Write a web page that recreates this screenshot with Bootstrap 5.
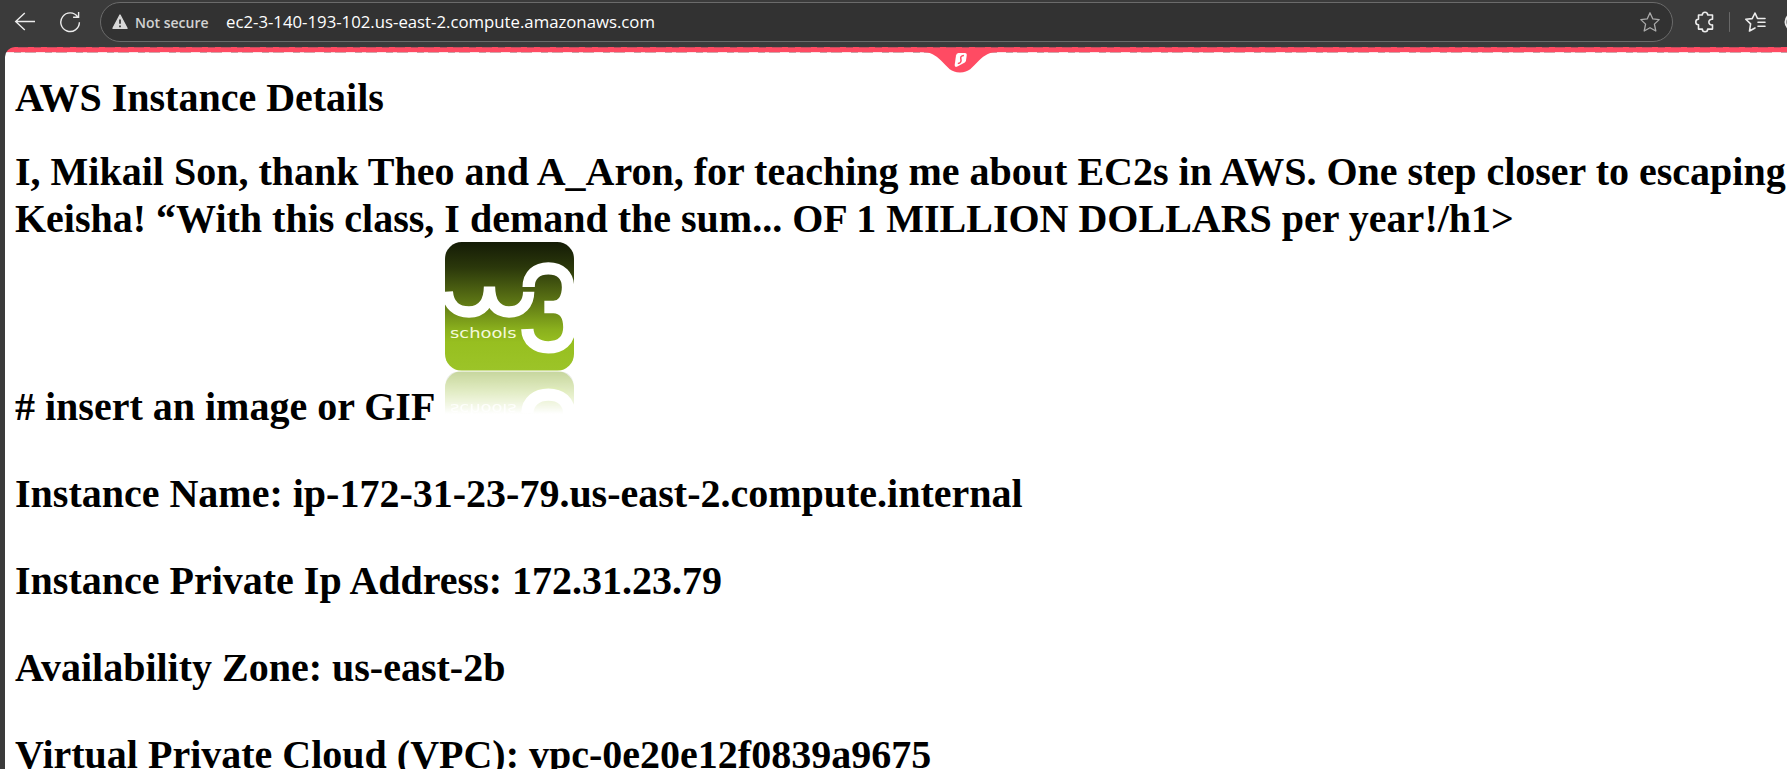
<!DOCTYPE html>
<html lang="en">
<head>
<meta charset="utf-8">
<title>AWS Instance Details</title>
<link href="https://cdn.jsdelivr.net/npm/bootstrap@5.3.0/dist/css/bootstrap.min.css" rel="stylesheet">
<style>
body{background:#3b3b3b;height:769px}
.toolbar{height:47px;font-family:"Open Sans","Noto Sans",sans-serif;padding-left:12px}
.toolbar svg{display:block;flex:none}
.address{width:1573px;height:40px;margin:2px 0 0 18px;background:#323232;border:1px solid #6b6b6b;border-radius:20px;padding:0 11px 0 11px;color:#fff}
.warn-label{width:91px;color:#d2d2d2;font-size:14px;font-weight:600;margin-left:7px;white-space:nowrap}
.url{font-size:16.75px;white-space:nowrap}
.page{
  margin-left:5px;height:722px;border-top-left-radius:10px;padding:27px 0 0 10px;color:#000;
  font-family:"Liberation Serif",serif;background-color:#fff;background-repeat:no-repeat;
  background-image:
    repeating-linear-gradient(90deg,#b9485a 0 7px,#ff4b63 7px 13px,#c84a5d 13px 23px,#ff4b63 23px 29px),
    repeating-linear-gradient(90deg,#fbe3e6 0 9px,#c9a0a6 9px 16px,#f5d5d9 16px 20px,#d3a5ab 20px 31px),
    linear-gradient(#ff4b63,#ff4b63);
  background-size:100% 1px,100% 1px,100% 5px;
  background-position:0 0,0 5px,0 0;
}
.notch{left:916px;top:48px}
.page h1,.page p{font-size:40px;line-height:47px;font-weight:700;white-space:nowrap}
.page h1{margin:0 0 27px}
.page p{margin:40px 0 0}
.page h1 + p{margin-top:39.5px}
.w3-logo{vertical-align:baseline;margin-left:1px}
</style>
</head>
<body class="overflow-hidden position-relative">
<nav class="toolbar d-flex align-items-start">
  <svg width="24" height="44" viewBox="0 0 24 44" fill="none" stroke="#ececec" stroke-width="1.4"><path d="M12.800 13 3.700 21.500 12.800 30M3.700 21.500H23"/></svg>
  <svg class="ms-4" width="22" height="44" viewBox="0 0 22 44" fill="none" stroke="#ececec" stroke-width="1.400"><path d="M17.800 17A9.300 9.300 0 1 0 19.400 22.300M18.600 12v5.300h-5.500"/></svg>
  <div class="address d-flex align-items-center">
    <svg width="16" height="16" viewBox="0 0 16 16"><path d="M8 1 15 14.300H1Z" fill="#d8d8d8" stroke="#d8d8d8" stroke-width="1.400" stroke-linejoin="round"/><path d="M8 5.500v4.300M8 11.400v1.800" stroke="#323232" stroke-width="1.700"/></svg>
    <span class="warn-label">Not secure</span><span class="url">ec2-3-140-193-102.us-east-2.compute.amazonaws.com</span>
    <svg class="ms-auto" width="22" height="22" viewBox="0 0 22 22" fill="none" stroke="#aaa" stroke-width="1.300" stroke-linejoin="round"><path d="m11 1.800 2.800 6.100 6.400.7-4.800 4.500 1.400 6.900-5.800-3.300-5.800 3.300 1.400-6.900L1.800 8.600l6.400-.7Z"/></svg>
  </div>
  <svg width="114" height="44" viewBox="1673 0 114 44" fill="none" stroke="#ececec" stroke-width="1.600" stroke-linejoin="round" stroke-linecap="round">
    <path d="M1698.500 15h3.800a2.700 2.700 0 0 1 5.400 0h4.800v4.300a2.900 2.900 0 1 0 0 5.600v4.200h-4.800a2.700 2.700 0 0 1-5.400 0H1698.500v-4.400a2.700 2.700 0 0 1 0-5.400Z"/>
    <path d="M1729.500 12.500V31.500" stroke="#686868" stroke-width="1"/>
    <path d="M1765 18.500H1757.500L1755 13 1752.200 18.600 1745.800 19.200 1750.600 23.900 1749.500 31 1755 28M1758 22.300H1765M1758 26.300H1765"/>
    <circle cx="1794" cy="22" r="8.500" stroke-width="2"/>
  </svg>
</nav>
<main class="page">
  <h1>AWS Instance Details</h1>
  <h1 class="mb-0">I, Mikail Son, thank Theo and A_Aron, for teaching me about EC2s in AWS. One step closer to escaping<br>Keisha! “With this class, I demand the sum... OF 1 MILLION DOLLARS per year!/h1&gt;<br># insert an image or GIF <svg class="w3-logo" width="130" height="178" viewBox="45 36 390 534">
    <defs>
      <linearGradient id="leaf" x1="0" y1="0" x2="0" y2="1"><stop stop-color="#141b06"/><stop offset=".2" stop-color="#2b380b"/><stop offset=".45" stop-color="#5a7214"/><stop offset=".68" stop-color="#8ab01d"/><stop offset=".78" stop-color="#97bf20"/><stop offset="1" stop-color="#9cc428"/></linearGradient>
      <linearGradient id="shade" gradientUnits="userSpaceOnUse" x1="0" y1="424" x2="0" y2="520"><stop stop-color="#8c9a70" stop-opacity=".45"/><stop offset="1" stop-color="#8c9a70" stop-opacity="0"/></linearGradient>
      <linearGradient id="fade" gradientUnits="userSpaceOnUse" x1="0" y1="424" x2="0" y2="552"><stop stop-color="#888"/><stop offset=".5" stop-color="#444"/><stop offset="1" stop-color="#000"/></linearGradient>
      <clipPath id="tile"><rect x="45" y="36" width="387" height="386" rx="50"/></clipPath>
      <mask id="fadeMask" maskUnits="userSpaceOnUse" x="45" y="420" width="390" height="150"><rect x="45" y="424" width="390" height="140" fill="url(#fade)"/></mask>
    </defs>
    <g id="mark3" clip-path="url(#tile)">
      <rect x="45" y="36" width="387" height="386" fill="url(#leaf)"/>
      <g fill="none" stroke="#fff" stroke-width="34">
        <path d="M52 185C55 225 80 246 117 246 155 246 178 222 178.500 170 179 222 200 246 237 246 272 246 296 222 296 185"/>
        <path stroke-width="37" d="M296 171C296 136 320 115 355 115 393 115 414 138 414 172 414 208 396 231 370 231H343M370 231C401 231 418 255 418 292 418 332 392 352 355 352 320 352 293 332 292 297"/>
      </g>
      <path d="M408 165H432V300H414Z" fill="#fff"/>
      <text x="60" y="323" font-family="DejaVu Sans, sans-serif" font-size="43" font-weight="400" fill="#f4f9dc" textLength="200" lengthAdjust="spacingAndGlyphs">schools</text>
    </g>
    <g mask="url(#fadeMask)"><use href="#mark3" transform="translate(0 846) scale(1 -1)"/><path d="M45 474Q45 424 95 424H382Q432 424 432 474V500C415 474 390 470 355 470 315 470 285 495 275 530H45Z" fill="url(#shade)"/></g>
  </svg></h1>
  <p>Instance Name: ip-172-31-23-79.us-east-2.compute.internal</p>
  <p>Instance Private Ip Address: 172.31.23.79</p>
  <p>Availability Zone: us-east-2b</p>
  <p>Virtual Private Cloud (VPC): vpc-0e20e12f0839a9675</p>
</main>
<svg class="notch position-absolute" width="88" height="26" viewBox="916 48 88 26">
  <path d="M916 48H1004V52H998C989 52 985 55 979 60.500 972 67.500 969 72.500 960 72.500 951 72.500 948 67.500 941 60.500 935 55 931 52 922 52H916Z" fill="#ff4b63"/>
  <path d="M958.500 53H965q1.800 0 1.800 1.800L966 60.500q-.2 1.200-1.200 2L957.300 66.600q-2.800 1-2.600-1.500L956 55.500q.4-2.500 2.500-2.500Z" fill="#fff"/>
  <path d="M963.900 55.500C961 55.500 960.300 57.500 960.900 59.200 961.500 61.500 960.500 63.500 957.800 63.500" fill="none" stroke="#ff4b63" stroke-width="1.500"/>
</svg>
<script src="https://cdn.jsdelivr.net/npm/bootstrap@5.3.0/dist/js/bootstrap.bundle.min.js"></script>
</body>
</html>
